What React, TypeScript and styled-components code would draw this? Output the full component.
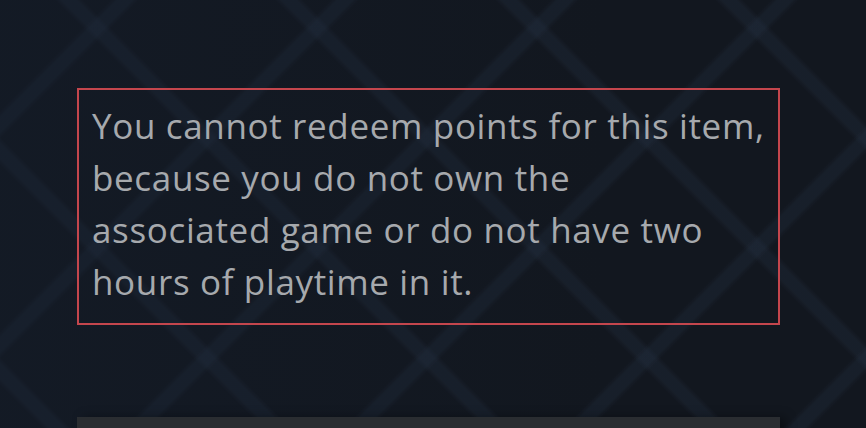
import styled, { createGlobalStyle } from "styled-components";

const GlobalStyle = createGlobalStyle`
  html, body {
    margin: 0;
    padding: 0;
    background: #12171f;
    overflow: hidden;
  }
`;

// diamond lattice: two diagonal band sets inside one 220px tile
const band = "rgba(40, 54, 74, 0.26)";

const diagonal = (angle: number) => `linear-gradient(
  ${angle}deg,
  ${band} 0,
  ${band} 5px,
  transparent 10px,
  transparent calc(50% - 10px),
  ${band} calc(50% - 5px),
  ${band} calc(50% + 5px),
  transparent calc(50% + 10px),
  transparent calc(100% - 10px),
  ${band} calc(100% - 5px)
)`;

const Page = styled.div`
  height: 100vh;
  box-sizing: border-box;
  padding: 88px 0 0 77px;
  overflow: hidden;
  background-color: #12171f;
  background-image:
    linear-gradient(90deg, rgba(22, 32, 48, 0.35), rgba(0, 0, 0, 0) 70%),
    ${diagonal(45)},
    ${diagonal(135)};
  background-size: 100% 100%, 220px 220px, 220px 220px;
  background-position: 0 0, 97px 28px, 97px 28px;
`;

const Column = styled.div`
  width: 703px;
  display: flex;
  flex-direction: column;
  gap: 92px;
`;

const Notice = styled.div`
  box-sizing: border-box;
  height: 237px;
  border: 2px solid #c4464d;
  padding: 10px 8px 0 13px;
`;

const Message = styled.p`
  margin: 0;
  font-family: "Open Sans", "DejaVu Sans", sans-serif;
  font-size: 35px;
  letter-spacing: 0.65px;
  line-height: 52px;
  color: #a6a9ad;
`;

const Panel = styled.div`
  height: 40px;
  background: #2a2d31;
  box-shadow: 6px 0 10px rgba(0, 0, 0, 0.35);
`;

export default function App() {
  return (
    <>
      <GlobalStyle />
      <Page>
        <Column>
          <Notice>
            <Message>
              You cannot redeem points for this item,
              <br />
              because you do not own the
              <br />
              associated game or do not have two
              <br />
              hours of playtime in it.
            </Message>
          </Notice>
          <Panel />
        </Column>
      </Page>
    </>
  );
}
